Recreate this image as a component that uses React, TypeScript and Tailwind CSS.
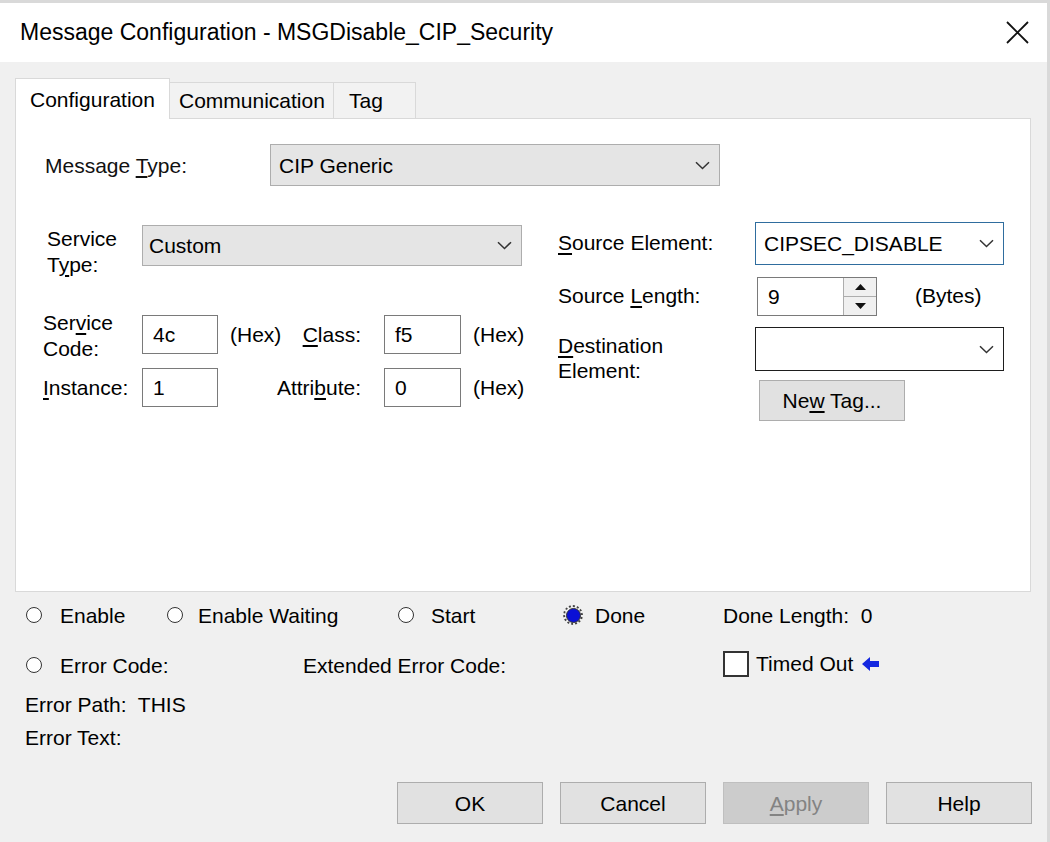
import React from 'react';

const Chevron: React.FC = () => (
  <svg width="15" height="9" viewBox="0 0 15 9" fill="none">
    <path d="M1 1.2 L7.5 7.5 L14 1.2" stroke="#333" strokeWidth="1.5" />
  </svg>
);

const U: React.FC<{ children: React.ReactNode }> = ({ children }) => (
  <span className="underline underline-offset-[3px] decoration-[1.5px]">{children}</span>
);

const Radio: React.FC<{ checked?: boolean }> = ({ checked }) =>
  checked ? (
    <span className="w-[20px] h-[20px] rounded-full border-[2px] border-dotted border-[#444] flex items-center justify-center shrink-0">
      <span className="w-[15px] h-[15px] rounded-full border-[1.5px] border-[#333] bg-[#0a10d6]" />
    </span>
  ) : (
    <span className="w-[16px] h-[16px] rounded-full border-[1.5px] border-[#333] bg-white shrink-0" />
  );

const TextBox: React.FC<{ value: string; w: string }> = ({ value, w }) => (
  <div className={`${w} h-[39px] bg-white border-[1.5px] border-[#7a7a7a] flex items-center pl-[10px] shrink-0`}>
    {value}
  </div>
);

const Button: React.FC<{ children: React.ReactNode; disabled?: boolean }> = ({ children, disabled }) => (
  <div
    className={
      disabled
        ? 'w-[146px] h-[42px] bg-[#cccccc] border-[1.5px] border-[#bfbfbf] text-[#838383] flex items-center justify-center'
        : 'w-[146px] h-[42px] bg-[#e1e1e1] border-[1.5px] border-[#adadad] flex items-center justify-center'
    }
  >
    <span>{children}</span>
  </div>
);

export default function App() {
  return (
    <div className="w-[1050px] h-[842px] bg-[#f0f0f0] border-t-[3px] border-r-[3px] border-[#d9d9d9] flex flex-col overflow-hidden text-[21px] leading-none text-black font-['Liberation_Sans',Arial,sans-serif]">
      {/* title bar */}
      <div className="h-[59px] bg-white flex items-center justify-between pl-[20px] pr-[17px] shrink-0">
        <span className="text-[23px]">Message Configuration - MSGDisable_CIP_Security</span>
        <svg width="25" height="25" viewBox="0 0 25 25">
          <path d="M2 2 L23 23 M23 2 L2 23" stroke="#111" strokeWidth="1.8" />
        </svg>
      </div>

      <div className="px-[15px] pt-[16px] flex flex-col">
        {/* tabs */}
        <div className="flex items-end h-[40px]">
          <div className="w-[155px] h-[41px] bg-white border border-b-0 border-[#d9d9d9] -mb-px relative z-10 flex items-center pl-[14px]">
            Configuration
          </div>
          <div className="w-[164px] h-[36px] bg-[#f2f2f2] border-t border-r border-[#d9d9d9] flex items-center pl-[9px]">
            Communication
          </div>
          <div className="w-[82px] h-[36px] bg-[#f2f2f2] border-t border-r border-[#d9d9d9] flex items-center pl-[15px]">
            Tag
          </div>
        </div>

        {/* panel */}
        <div className="w-[1016px] h-[474px] bg-white border border-[#d9d9d9] flex flex-col">
          <div className="flex items-center mt-[25px] pl-[29px]">
            <span className="w-[225px] text-[#111]">
              Message <U>T</U>ype:
            </span>
            <div className="w-[450px] h-[42px] bg-[#e5e5e5] border-[1.5px] border-[#adadad] flex items-center justify-between pl-[8px] pr-[9px]">
              <span>CIP Generic</span>
              <Chevron />
            </div>
          </div>

          <div className="flex items-start mt-[36px]">
            {/* left column */}
            <div className="w-[542px] pl-[27px] pt-[3px] flex flex-col">
              <div className="flex items-start h-[41px]">
                <span className="w-[99px] pl-[4px] leading-[26px] mt-[1px]">
                  Service
                  <br />
                  T<U>y</U>pe:
                </span>
                <div className="w-[380px] h-[41px] bg-[#e5e5e5] border-[1.5px] border-[#adadad] flex items-center justify-between pl-[6px] pr-[9px]">
                  <span>Custom</span>
                  <Chevron />
                </div>
              </div>

              <div className="flex items-center h-[39px] mt-[49px]">
                <span className="w-[99px] leading-[26px] pt-[3px]">
                  Ser<U>v</U>ice
                  <br />
                  Code:
                </span>
                <TextBox value="4c" w="w-[76px]" />
                <div className="w-[143px] flex items-center justify-between pl-[12px]">
                  <span>(Hex)</span>
                  <span>
                    <U>C</U>lass:
                  </span>
                </div>
                <div className="w-[23px]" />
                <TextBox value="f5" w="w-[77px]" />
                <span className="ml-[12px]">(Hex)</span>
              </div>

              <div className="flex items-center h-[39px] mt-[14px]">
                <span className="w-[99px]">
                  <U>I</U>nstance:
                </span>
                <TextBox value="1" w="w-[76px]" />
                <div className="w-[143px] flex items-center justify-end">
                  <span>
                    Attri<U>b</U>ute:
                  </span>
                </div>
                <div className="w-[23px]" />
                <TextBox value="0" w="w-[77px]" />
                <span className="ml-[12px]">(Hex)</span>
              </div>
            </div>

            {/* right column */}
            <div className="flex flex-col">
              <div className="flex items-center">
                <span className="w-[197px] -mt-[3px]">
                  <U>S</U>ource Element:
                </span>
                <div className="w-[249px] h-[43px] bg-white border-[1.5px] border-[#2f6d9e] flex items-center justify-between pl-[8px] pr-[9px]">
                  <span>CIPSEC_DISABLE</span>
                  <Chevron />
                </div>
              </div>

              <div className="flex items-center mt-[12px]">
                <span className="w-[199px] -mt-[3px]">
                  Source <U>L</U>ength:
                </span>
                <div className="w-[120px] h-[39px] bg-white border-[1.5px] border-[#7a7a7a] flex">
                  <span className="flex-1 flex items-center pl-[10px]">9</span>
                  <div className="w-[33px] flex flex-col border-l border-[#adadad] bg-[#f0f0f0]">
                    <div className="flex-1 flex items-center justify-center border-b border-[#adadad]">
                      <svg width="11" height="6" viewBox="0 0 11 6">
                        <path d="M0 6 L5.5 0 L11 6 Z" fill="#111" />
                      </svg>
                    </div>
                    <div className="flex-1 flex items-center justify-center">
                      <svg width="11" height="6" viewBox="0 0 11 6">
                        <path d="M0 0 L5.5 6 L11 0 Z" fill="#111" />
                      </svg>
                    </div>
                  </div>
                </div>
                <span className="ml-[38px] -mt-[3px]">(Bytes)</span>
              </div>

              <div className="flex items-start h-[44px] mt-[11px]">
                <span className="w-[197px] leading-[25px] mt-[6px]">
                  <U>D</U>estination
                  <br />
                  Element:
                </span>
                <div className="w-[249px] h-[44px] bg-white border-[1.5px] border-[#1e1e1e] flex items-center justify-end pr-[9px]">
                  <Chevron />
                </div>
              </div>

              <div className="ml-[201px] mt-[9px]">
                <div className="w-[146px] h-[41px] bg-[#e1e1e1] border-[1.5px] border-[#adadad] flex items-center justify-center">
                  <span>
                    Ne<U>w</U> Tag...
                  </span>
                </div>
              </div>
            </div>
          </div>
        </div>

        {/* status area */}
        <div className="flex items-center h-[30px] mt-[8px]">
          <div className="w-[152px] flex items-center pl-[11px] gap-[18px]">
            <Radio />
            <span>Enable</span>
          </div>
          <div className="w-[231px] flex items-center gap-[15px]">
            <Radio />
            <span>Enable Waiting</span>
          </div>
          <div className="w-[165px] flex items-center gap-[17px]">
            <Radio />
            <span>Start</span>
          </div>
          <div className="w-[160px] flex items-center gap-[12px]">
            <Radio checked />
            <span>Done</span>
          </div>
          <span className="whitespace-pre">Done Length:  0</span>
        </div>

        <div className="flex items-center h-[30px] mt-[20px]">
          <div className="w-[288px] flex items-center pl-[11px] gap-[18px]">
            <Radio />
            <span>Error Code:</span>
          </div>
          <div className="w-[420px]">Extended Error Code:</div>
          <div className="flex items-center -mt-[3px]">
            <span className="w-[26px] h-[26px] border-[2px] border-[#333] bg-white" />
            <span className="ml-[7px]">Timed Out</span>
            <svg className="ml-[9px]" width="17" height="14" viewBox="0 0 17 14">
              <path d="M0 7 L8 0 L8 4 L17 4 L17 10 L8 10 L8 14 Z" fill="#1428e0" />
            </svg>
          </div>
        </div>

        <div className="flex items-center h-[30px] mt-[9px] pl-[10px] whitespace-pre">Error Path:  THIS</div>
        <div className="flex items-center h-[30px] mt-[3px] pl-[10px]">Error Text:</div>

        <div className="flex justify-end gap-[17px] mt-[30px]">
          <Button>OK</Button>
          <Button>Cancel</Button>
          <Button disabled>
            <U>A</U>pply
          </Button>
          <Button>Help</Button>
        </div>
      </div>
    </div>
  );
}
